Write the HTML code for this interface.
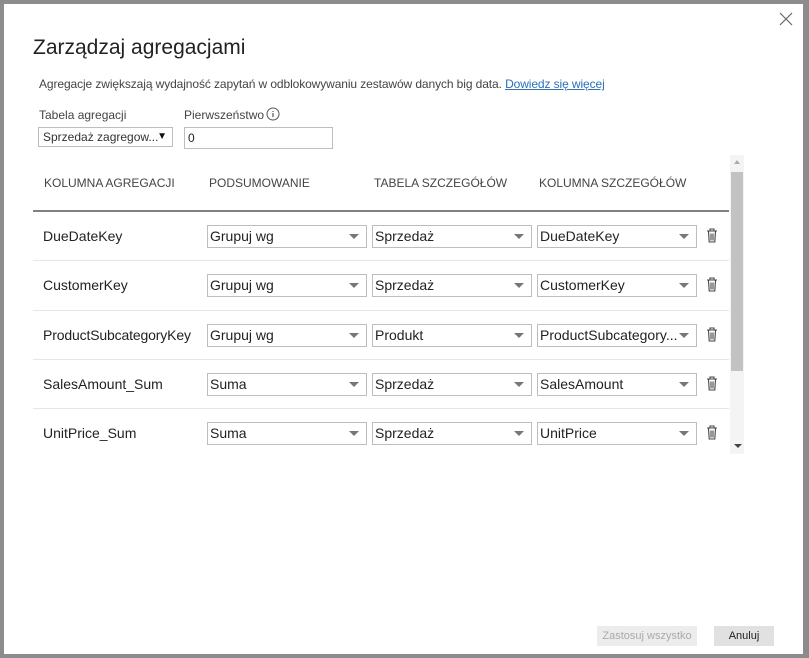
<!DOCTYPE html>
<html><head><meta charset="utf-8"><style>
*{margin:0;padding:0;box-sizing:border-box}
body{width:809px;height:658px;background:#8c8c8c;position:relative;overflow:hidden;font-family:"Liberation Sans",sans-serif;color:#333}
.p{position:absolute;left:4px;top:4px;width:799px;height:650px;background:#fff}
.a{position:absolute;white-space:nowrap}
.sel{position:absolute;height:23px;border:1px solid #bdbdbd;background:#fff;font-size:14px;line-height:21px;padding-left:2px;color:#222}
.sel::after{content:"";position:absolute;right:7px;top:8px;border-left:5px solid transparent;border-right:5px solid transparent;border-top:5px solid #777}
.h{font-size:12px;color:#444;letter-spacing:0;top:176px}
.r{font-size:14px;color:#222}
.ln{position:absolute;left:33px;width:696px;height:1px;background:#e6e6e6}
.tr{position:absolute;left:706px;width:12px;height:15px}
</style></head><body>
<div class="p"></div>
<svg class="a" style="left:779px;top:12px" width="14" height="14"><path d="M1 1L13 13M13 1L1 13" stroke="#666" stroke-width="1.2"/></svg>
<div class="a" style="left:33px;top:36px;font-size:21px;color:#222">Zarządzaj agregacjami</div>
<div class="a" style="left:39px;top:77px;font-size:12px;color:#444;letter-spacing:-0.1px">Agregacje zwiększają wydajność zapytań w odblokowywaniu zestawów danych big data. <span style="color:#2b70b8;text-decoration:underline">Dowiedz się więcej</span></div>
<div class="a" style="left:39px;top:108px;font-size:12px;color:#444">Tabela agregacji</div>
<div class="a" style="left:184px;top:108px;font-size:12px;color:#444">Pierwszeństwo</div>
<svg class="a" style="left:266px;top:107px" width="14" height="14"><circle cx="7" cy="7" r="6" fill="none" stroke="#555"/><path d="M7 6v4M7 4v1" stroke="#555" stroke-width="1.2"/></svg>
<div class="a" style="left:38px;top:127px;width:135px;height:20px;border:1px solid #bdbdbd;font-size:12px;line-height:18px;padding-left:4px;color:#333">Sprzedaż zagregow...<span style="position:absolute;right:5px;font-size:10px;color:#111">▼</span></div>
<div class="a" style="left:184px;top:127px;width:149px;height:22px;border:1px solid #bdbdbd;font-size:12px;line-height:20px;padding-left:3px;color:#222">0</div>
<div class="a h" style="left:44px">KOLUMNA AGREGACJI</div>
<div class="a h" style="left:209px">PODSUMOWANIE</div>
<div class="a h" style="left:374px">TABELA SZCZEGÓŁÓW</div>
<div class="a h" style="left:539px">KOLUMNA SZCZEGÓŁÓW</div>
<div class="a" style="left:33px;top:210px;width:696px;height:2px;background:#808080"></div>
<div class="ln" style="top:260px"></div><div class="ln" style="top:310px"></div><div class="ln" style="top:359px"></div><div class="ln" style="top:408px"></div>

<div class="a r" style="left:43px;top:228px">DueDateKey</div>
<div class="sel" style="left:207px;top:225px;width:160px">Grupuj wg</div>
<div class="sel" style="left:372px;top:225px;width:160px">Sprzedaż</div>
<div class="sel" style="left:537px;top:225px;width:160px">DueDateKey</div>

<div class="a r" style="left:43px;top:277px">CustomerKey</div>
<div class="sel" style="left:207px;top:274px;width:160px">Grupuj wg</div>
<div class="sel" style="left:372px;top:274px;width:160px">Sprzedaż</div>
<div class="sel" style="left:537px;top:274px;width:160px">CustomerKey</div>

<div class="a r" style="left:43px;top:327px;letter-spacing:-0.15px">ProductSubcategoryKey</div>
<div class="sel" style="left:207px;top:324px;width:160px">Grupuj wg</div>
<div class="sel" style="left:372px;top:324px;width:160px">Produkt</div>
<div class="sel" style="left:537px;top:324px;width:160px">ProductSubcategory...</div>

<div class="a r" style="left:43px;top:376px">SalesAmount_Sum</div>
<div class="sel" style="left:207px;top:373px;width:160px">Suma</div>
<div class="sel" style="left:372px;top:373px;width:160px">Sprzedaż</div>
<div class="sel" style="left:537px;top:373px;width:160px">SalesAmount</div>

<div class="a r" style="left:43px;top:425px">UnitPrice_Sum</div>
<div class="sel" style="left:207px;top:422px;width:160px">Suma</div>
<div class="sel" style="left:372px;top:422px;width:160px">Sprzedaż</div>
<div class="sel" style="left:537px;top:422px;width:160px">UnitPrice</div>

<svg class="tr" style="top:228px" viewBox="0 0 12 15"><path d="M1 3h10M4 3V1h4v2M2.5 3.5l.7 10.5h5.6l.7-10.5M5 5.5v7M7 5.5v7" fill="none" stroke="#444" stroke-width="1.1"/></svg>
<svg class="tr" style="top:277px" viewBox="0 0 12 15"><path d="M1 3h10M4 3V1h4v2M2.5 3.5l.7 10.5h5.6l.7-10.5M5 5.5v7M7 5.5v7" fill="none" stroke="#444" stroke-width="1.1"/></svg>
<svg class="tr" style="top:327px" viewBox="0 0 12 15"><path d="M1 3h10M4 3V1h4v2M2.5 3.5l.7 10.5h5.6l.7-10.5M5 5.5v7M7 5.5v7" fill="none" stroke="#444" stroke-width="1.1"/></svg>
<svg class="tr" style="top:376px" viewBox="0 0 12 15"><path d="M1 3h10M4 3V1h4v2M2.5 3.5l.7 10.5h5.6l.7-10.5M5 5.5v7M7 5.5v7" fill="none" stroke="#444" stroke-width="1.1"/></svg>
<svg class="tr" style="top:425px" viewBox="0 0 12 15"><path d="M1 3h10M4 3V1h4v2M2.5 3.5l.7 10.5h5.6l.7-10.5M5 5.5v7M7 5.5v7" fill="none" stroke="#444" stroke-width="1.1"/></svg>

<div class="a" style="left:730px;top:155px;width:14px;height:299px;background:#f4f4f4"></div>
<div class="a" style="left:731px;top:172px;width:12px;height:199px;background:#c2c2c2"></div>
<div class="a" style="left:734px;top:160px;border-left:3px solid transparent;border-right:3px solid transparent;border-bottom:4px solid #aaa"></div>
<div class="a" style="left:734px;top:444px;border-left:4px solid transparent;border-right:4px solid transparent;border-top:4px solid #444"></div>

<div class="a" style="left:597px;top:626px;width:100px;height:20px;background:#ececec;font-size:11px;line-height:20px;text-align:center;color:#aaa">Zastosuj wszystko</div>
<div class="a" style="left:714px;top:626px;width:60px;height:20px;background:#e1e1e1;font-size:11px;line-height:20px;text-align:center;color:#222">Anuluj</div>
</body></html>
